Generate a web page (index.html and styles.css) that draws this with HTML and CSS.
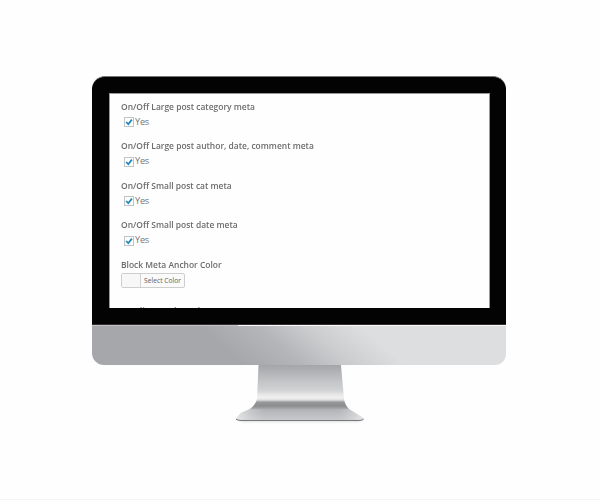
FILE: index.html
```html
<!DOCTYPE html>
<html lang="en">
<head>
<meta charset="utf-8">
<title>Block settings</title>
<link rel="stylesheet" href="styles.css">
</head>
<body>
<main class="monitor">
  <div class="bezel">
    <form class="screen">
      <section class="option">
        <h2>On/Off Large post category meta</h2>
        <label><span class="check"><svg viewBox="0 0 8 8"><path d="M1.2 4 3.3 6.2 6.9 1.6"/></svg></span>Yes</label>
      </section>
      <section class="option">
        <h2>On/Off Large post author, date, comment meta</h2>
        <label><span class="check"><svg viewBox="0 0 8 8"><path d="M1.2 4 3.3 6.2 6.9 1.6"/></svg></span>Yes</label>
      </section>
      <section class="option">
        <h2>On/Off Small post cat meta</h2>
        <label><span class="check"><svg viewBox="0 0 8 8"><path d="M1.2 4 3.3 6.2 6.9 1.6"/></svg></span>Yes</label>
      </section>
      <section class="option">
        <h2>On/Off Small post date meta</h2>
        <label><span class="check"><svg viewBox="0 0 8 8"><path d="M1.2 4 3.3 6.2 6.9 1.6"/></svg></span>Yes</label>
      </section>
      <section class="option color">
        <h2>Block Meta Anchor Color</h2>
        <div class="picker"><span class="swatch"></span><span class="caption">Select Color</span></div>
      </section>
      <section class="option">
        <h2>Heading Border Color</h2>
      </section>
    </form>
  </div>
  <div class="chin"></div>
  <svg class="stand" viewBox="0 0 130 60" width="130" height="60">
    <defs>
      <linearGradient id="metal" x1="0" y1="0" x2="0" y2="1">
        <stop offset="0" stop-color="#a3a5a8"/>
        <stop offset=".12" stop-color="#b0b2b5"/>
        <stop offset=".28" stop-color="#c1c3c5"/>
        <stop offset=".46" stop-color="#d2d3d5"/>
        <stop offset=".53" stop-color="#e6e6e7"/>
        <stop offset=".59" stop-color="#f1f1f1"/>
        <stop offset=".63" stop-color="#dedede"/>
        <stop offset=".67" stop-color="#969799"/>
        <stop offset=".74" stop-color="#8c8d8f"/>
        <stop offset=".81" stop-color="#b4b5b8"/>
        <stop offset="1" stop-color="#c9cacd"/>
      </linearGradient>
      <linearGradient id="foot" x1="0" y1="0" x2="1" y2="0">
        <stop offset="0" stop-color="#ececed" stop-opacity=".85"/>
        <stop offset=".22" stop-color="#d5d6d8" stop-opacity="0"/>
        <stop offset=".8" stop-color="#d5d6d8" stop-opacity="0"/>
        <stop offset="1" stop-color="#ececed" stop-opacity=".85"/>
      </linearGradient>
      <filter id="soft" x="-10%" y="-200%" width="120%" height="500%"><feGaussianBlur stdDeviation="1"/></filter>
    </defs>
    <path d="M3 55H127L123 57H8Z" fill="#777" opacity=".25" filter="url(#soft)"/>
    <path d="M23.5 0H106L109 34Q110 40 114 44L129 53.5Q129 55.5 125 55.5H5Q1 55.5 1 53.5L6 48L15 44Q21 39 22 34Z" fill="url(#metal)"/>
    <path d="M6 48 15 44H114L129 53.5V55H1V53.5Z" fill="url(#foot)"/>
    <path d="M1 54.3Q3 55.4 6 55.5H124Q128 55.3 128.500 54.1" fill="none" stroke="#77787a" stroke-width="1"/>
  </svg>
</main>
</body>
</html>
```
FILE: styles.css
```css
* {
  box-sizing: border-box;
}

body {
  margin: 0;
  height: 500px;
  overflow: hidden;
  background: #fefefe;
  border-bottom: 1px solid #f4f4f4;
  font-family: "Open Sans", sans-serif;
}

.monitor {
  width: 414px;
  margin-left: 92px;
  padding-top: 76px;
}

.bezel {
  height: 249px;
  padding: 16px 16px 16px 17px;
  background: #030303;
  border-top: 1px solid #777;
  border-bottom: 1px solid #322d2e;
  border-radius: 13px 13px 0 0;
}

.screen {
  height: 215px;
  padding: 6.8px 0 0 11px;
  overflow: hidden;
  background: #fefefe;
  border-top: 1px solid #999;
  border-left: 1px solid #999;
  border-right: 1px solid #999;
}

.option {
  height: 39.5px;
}

.option h2 {
  width: max-content;
  margin: 0;
  height: 12px;
  font-size: 9.2px;
  font-weight: 600;
  line-height: 12px;
  color: #6c6c6c;
  white-space: nowrap;
  transform: scaleX(0.92);
  transform-origin: 0 0;
}

.option label {
  display: flex;
  align-items: center;
  gap: 1px;
  height: 12px;
  margin: 3px 0 0 3px;
  font-size: 9.2px;
  letter-spacing: -0.25px;
  line-height: 12px;
  color: #777;
}

.check {
  width: 10px;
  height: 10px;
  margin-top: 1px;
  border: 1px solid #c0c4c7;
  background: #fefefe;
}

.check svg {
  display: block;
  width: 8px;
  height: 8px;
  overflow: visible;
}

.check path {
  fill: none;
  stroke: #2189b8;
  stroke-width: 1.8;
}

.option.color {
  height: 45.8px;
}

.picker {
  display: flex;
  width: 64px;
  height: 15px;
  margin-top: 2.6px;
  border: 1px solid #cecece;
  border-radius: 2px;
  background: #fafafa;
}

.swatch {
  width: 19px;
  border-right: 1px solid #d2d2d2;
  background: #f7f7f7;
}

.caption {
  flex: 1;
  font-size: 6.7px;
  line-height: 13px;
  text-align: center;
  color: #606060;
  white-space: nowrap;
}

.chin {
  height: 40px;
  background:
    linear-gradient(90deg, #c4c4c7 0 146px, #fafafa 146px) 0 0 / 100% 1px no-repeat,
    linear-gradient(40deg, #a6a7ab 0 33%, #b5b6b9 46%, #cbccce 56%, #dddee0 68%);
  border-radius: 0 0 11px 12px;
}

.stand {
  display: block;
  margin-left: 143px;
}
```
